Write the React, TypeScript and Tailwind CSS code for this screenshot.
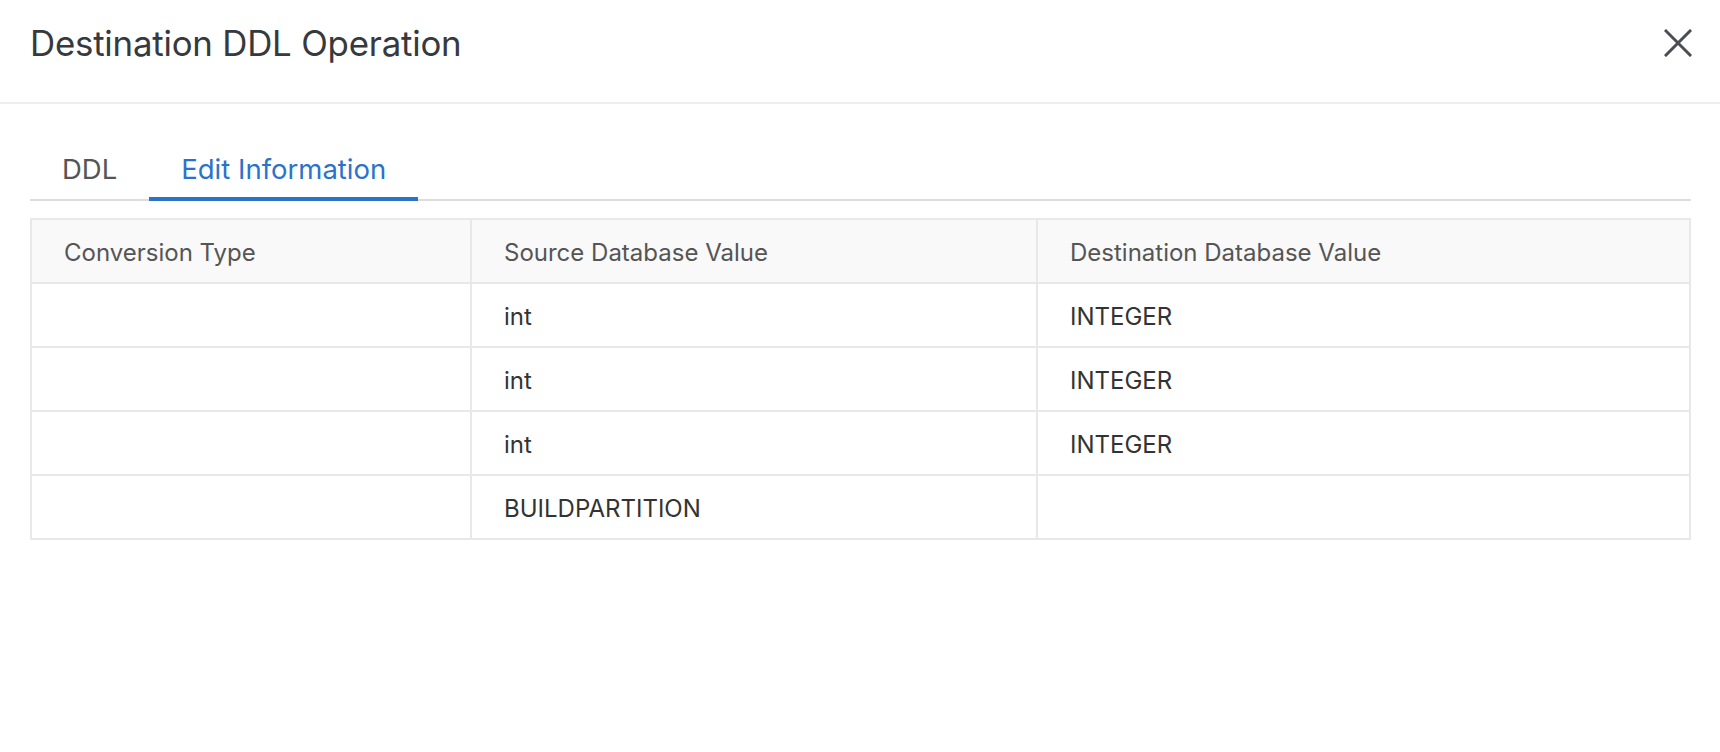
import React, { useState } from "react";

type Row = {
    conversionType: string;
    source: string;
    destination: string;
};

const rows: Row[] = [
    { conversionType: "", source: "int", destination: "INTEGER" },
    { conversionType: "", source: "int", destination: "INTEGER" },
    { conversionType: "", source: "int", destination: "INTEGER" },
    { conversionType: "", source: "BUILDPARTITION", destination: "" },
];

const tabs = ["DDL", "Edit Information"];

export default function App() {
    const [activeTab, setActiveTab] = useState("Edit Information");

    return (
        <div className="w-[1720px] h-[752px] bg-white overflow-hidden font-['Inter','Noto_Sans',sans-serif]">
            {/* Header */}
            <div className="h-[104px] flex items-center justify-between pl-[30px] pr-[28px] pb-[16px] border-b-2 border-[#eeeeee]">
                <h1 className="text-[34.8px] font-normal text-[#36393d] tracking-[-0.2px]">Destination DDL Operation</h1>
                <button className="w-[28px] h-[28px] flex items-center justify-center text-[#4b4d52]">
                    <svg width="28" height="28" viewBox="0 0 28 28" fill="none" stroke="currentColor" strokeWidth="3" strokeLinecap="square">
                        <path d="M2 2 L26 26 M26 2 L2 26" />
                    </svg>
                </button>
            </div>

            <div className="px-[30px] pt-[37px]">
                {/* Tabs */}
                <div className="flex border-b-2 border-[#dddddd] w-[1661px]">
                    {tabs.map((tab) => (
                        <button
                            key={tab}
                            onClick={() => setActiveTab(tab)}
                            className={`relative h-[58px] px-[32px] flex items-center text-[27.5px] ${activeTab === tab ? "text-[#2b73c9]" : "text-[#555555]"}`}
                        >
                            {tab}
                            {activeTab === tab && <span className="absolute left-0 right-0 -bottom-[2px] h-[4px] bg-[#2b73c9]" />}
                        </button>
                    ))}
                </div>

                {/* Table */}
                <table className="mt-[17px] w-[1661px] border-collapse border-2 border-[#e8e8e8] table-fixed">
                    <colgroup>
                        <col className="w-[440px]" />
                        <col className="w-[566px]" />
                        <col />
                    </colgroup>
                    <thead>
                        <tr className="bg-[#f9f9f9] h-[64px]">
                            <th className="border-2 border-[#e8e8e8] pl-[32px] pt-[4px] text-left font-normal text-[24px] text-[#555555]">Conversion Type</th>
                            <th className="border-2 border-[#e8e8e8] pl-[32px] pt-[4px] text-left font-normal text-[24px] text-[#555555]">Source Database Value</th>
                            <th className="border-2 border-[#e8e8e8] pl-[32px] pt-[4px] text-left font-normal text-[24px] text-[#555555]">Destination Database Value</th>
                        </tr>
                    </thead>
                    <tbody>
                        {rows.map((row, i) => (
                            <tr key={i} className="h-[64px]">
                                <td className="border-2 border-[#e8e8e8] pl-[32px] pt-[4px] text-[24px] text-[#333333]">{row.conversionType}</td>
                                <td className="border-2 border-[#e8e8e8] pl-[32px] pt-[4px] text-[24px] text-[#333333]">{row.source}</td>
                                <td className="border-2 border-[#e8e8e8] pl-[32px] pt-[4px] text-[24px] text-[#333333]">{row.destination}</td>
                            </tr>
                        ))}
                    </tbody>
                </table>
            </div>
        </div>
    );
}
